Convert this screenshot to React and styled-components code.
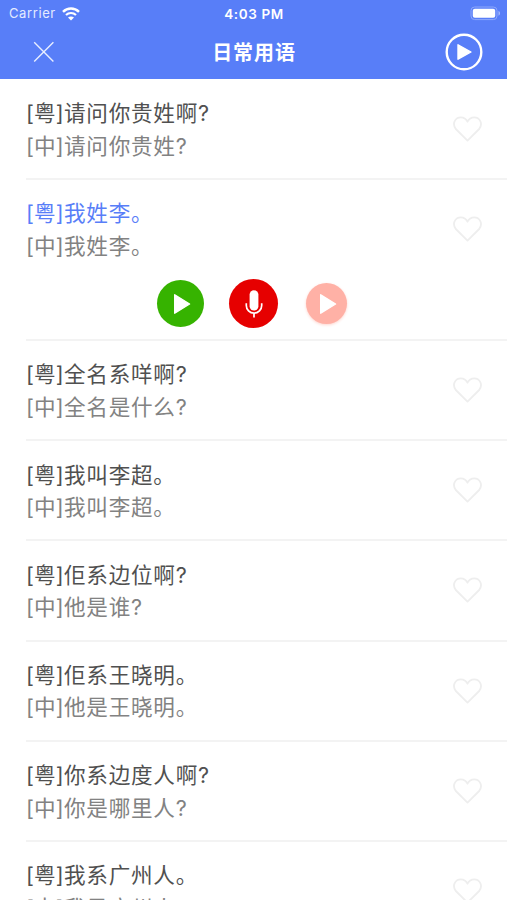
import React, { useState } from "react";
import styled, { createGlobalStyle } from "styled-components";

const GlobalStyle = createGlobalStyle`
  body {
    margin: 0;
    background: #ffffff;
  }
  svg {
    display: block;
  }
`;

const PhraseContainer = styled.div`
  display: flex;
  flex-direction: column;
  width: 507px;
  height: 900px;
  overflow: hidden;
  background: #ffffff;
  font-family: Inter, "Noto Sans CJK SC", sans-serif;
`;

const Header = styled.div`
  flex: none;
  height: 79.3px;
  background: #587ef8;
  color: #ffffff;
`;

const StatusBar = styled.div`
  display: grid;
  grid-template-columns: 1fr auto 1fr;
  align-items: center;
  height: 27px;
  padding: 0 6px 0 9px;
  font-size: 13px;
  line-height: 27px;
  .carrier {
    display: flex;
    align-items: center;
    gap: 6px;
    color: #e4ebff;
    letter-spacing: 0.6px;
  }
  .time {
    padding: 2px 2px 0 0;
    font-weight: 600;
    font-size: 13.5px;
    line-height: 25px;
    letter-spacing: 0.6px;
  }
  .battery {
    justify-self: end;
  }
`;

const TitleBar = styled.div`
  display: grid;
  grid-template-columns: 1fr auto 1fr;
  align-items: center;
  height: 50px;
  padding: 0 24px 0 33px;
  .title {
    margin: 0;
    padding: 2px 8px 0 0;
    font-size: 20px;
    font-weight: 700;
    line-height: 48px;
    letter-spacing: 0.9px;
  }
`;

const IconButton = styled.button`
  display: flex;
  padding: 0;
  border: none;
  background: none;
  cursor: pointer;
  justify-self: ${(props) => props.$side || "start"};
`;

const PhraseList = styled.div`
  display: flex;
  flex-direction: column;
  padding-left: 26px;
`;

const PhraseItem = styled.div`
  flex: none;
  box-sizing: border-box;
  height: ${(props) => (props.$open ? "161px" : "100.2px")};
  border-bottom: 2px solid #f3f3f3;
  &:first-child {
    height: 100.7px;
    padding-top: 0.5px;
  }
`;

const PhraseRow = styled.div`
  display: flex;
  align-items: center;
  justify-content: space-between;
  height: 98px;
  padding-right: 25px;
  .texts {
    padding-top: 1.6px;
  }
`;

const PhraseText = styled.div`
  font-size: 21.6px;
  line-height: 32.3px;
  letter-spacing: 0.75px;
  white-space: nowrap;
  color: ${(props) => props.$color};
`;

const Tag = styled.span`
  letter-spacing: 0.2px;
`;

const Controls = styled.div`
  display: flex;
  align-items: center;
  height: 52px;
  padding-left: 131px;
`;

const RoundButton = styled.button`
  display: flex;
  align-items: center;
  justify-content: center;
  box-sizing: border-box;
  width: ${(props) => props.$size}px;
  height: ${(props) => props.$size}px;
  margin: 0 ${(props) => props.$gap || 0}px 0 0;
  padding: 0 0 0 ${(props) => props.$nudge || 0}px;
  border: none;
  border-radius: 50%;
  background: ${(props) => props.$color};
  box-shadow: ${(props) => (props.$shadow ? "0 1px 3px #ffd5ce" : "none")};
  cursor: pointer;
`;

const phrases = [
  { yue: "请问你贵姓啊?", zh: "请问你贵姓?" },
  { yue: "我姓李。", zh: "我姓李。" },
  { yue: "全名系咩啊?", zh: "全名是什么?" },
  { yue: "我叫李超。", zh: "我叫李超。" },
  { yue: "佢系边位啊?", zh: "他是谁?" },
  { yue: "佢系王晓明。", zh: "他是王晓明。" },
  { yue: "你系边度人啊?", zh: "你是哪里人?" },
  { yue: "我系广州人。", zh: "我是广州人。" },
];

const WifiIcon = () => (
  <svg width="18" height="14" viewBox="0 0 18 14" fill="none" stroke="#fff">
    <path d="M1 4.8C5.5.3 12.5.3 17 4.8" strokeWidth="2.4" />
    <path d="M4 8c2.8-2.7 7.2-2.7 10 0" strokeWidth="2.2" />
    <path d="M9 13.5 6 10.6c1.7-1.5 4.3-1.5 6 0Z" fill="#fff" stroke="none" />
  </svg>
);

const BatteryIcon = () => (
  <svg width="31" height="15" viewBox="0 0 31 15" fill="none">
    <rect x="1" y="1" width="26" height="12.6" rx="3.6" stroke="#8fa8fb" />
    <rect x="2.8" y="2.8" width="22.4" height="9" rx="2" fill="#fff" />
    <path d="M28.5 5c2 .7 2 4 0 4.7Z" fill="#a6bafc" />
  </svg>
);

const PlayIcon = () => (
  <svg width="18" height="22" viewBox="0 0 18 22">
    <path
      d="M1.7 1.8 16.6 11 1.7 20.2Z"
      fill="#fff"
      stroke="#fff"
      strokeWidth="1.4"
      strokeLinejoin="round"
    />
  </svg>
);

const MicIcon = () => (
  <svg width="18" height="30" viewBox="0 0 18 30" fill="none" stroke="#fff">
    <rect x="4.6" y="1.2" width="8.8" height="20.4" rx="4.4" fill="#fff" stroke="none" />
    <path d="M1.3 14.2v2.2a7.7 7.7 0 0 0 15.4 0v-2.2M9 24v4.6" strokeWidth="1.7" />
  </svg>
);

const HeartIcon = ({ liked }) => (
  <svg width="29" height="26" viewBox="0 0 29 26">
    <path
      d="M14.5 24.6 2.8 13C-1.4 7.4 2.4 1.3 7.8 1.3c3 0 5.3 1.5 6.7 4.4 1.4-2.9 3.7-4.4 6.7-4.4 5.4 0 9.2 6.1 5 11.7Z"
      fill={liked ? "#e60000" : "none"}
      stroke={liked ? "#e60000" : "#eeeeee"}
      strokeWidth="1.8"
      strokeLinejoin="round"
    />
  </svg>
);

const PhraseControls = () => (
  <Controls>
    <RoundButton $size={47} $gap={25} $nudge={3} $color="#36b300">
      <PlayIcon />
    </RoundButton>
    <RoundButton $size={49} $gap={28} $color="#e60000">
      <MicIcon />
    </RoundButton>
    <RoundButton $size={41} $nudge={3} $color="#ffb1a6" $shadow>
      <PlayIcon />
    </RoundButton>
  </Controls>
);

const App = () => {
  const [selected, setSelected] = useState(1);
  const [liked, setLiked] = useState([]);

  const onLike = (e, index) => {
    e.stopPropagation();
    if (liked.includes(index)) {
      setLiked(liked.filter((item) => item !== index));
    } else {
      setLiked([...liked, index]);
    }
  };

  return (
    <PhraseContainer>
      <GlobalStyle />
      <Header>
        <StatusBar>
          <div className="carrier">
            Carrier
            <WifiIcon />
          </div>
          <div className="time">4:03 PM</div>
          <div className="battery">
            <BatteryIcon />
          </div>
        </StatusBar>
        <TitleBar>
          <IconButton>
            <svg width="22" height="22" viewBox="0 0 22 22">
              <path d="M1.2 1.2 20.4 20.4M20.4 1.2 1.2 20.4" stroke="#e8eeff" strokeWidth="1.4" />
            </svg>
          </IconButton>
          <h1 className="title">日常用语</h1>
          <IconButton $side="end">
            <svg width="38" height="38" viewBox="0 0 38 38">
              <circle cx="19" cy="19" r="17.3" fill="none" stroke="#fff" strokeWidth="2.4" />
              <path
                d="M13 11.8 26 19 13 26.2Z"
                fill="#fff"
                stroke="#fff"
                strokeWidth="1.4"
                strokeLinejoin="round"
              />
            </svg>
          </IconButton>
        </TitleBar>
      </Header>
      <PhraseList>
        {phrases.map((phrase, index) => (
          <PhraseItem key={index} $open={selected === index}>
            <PhraseRow onClick={() => setSelected(index)}>
              <div className="texts">
                <PhraseText $color={selected === index ? "#587ef8" : "#505050"}>
                  <Tag>[粤]</Tag>
                  {phrase.yue}
                </PhraseText>
                <PhraseText $color="#828282">
                  <Tag>[中]</Tag>
                  {phrase.zh}
                </PhraseText>
              </div>
              <IconButton onClick={(e) => onLike(e, index)}>
                <HeartIcon liked={liked.includes(index)} />
              </IconButton>
            </PhraseRow>
            {selected === index && <PhraseControls />}
          </PhraseItem>
        ))}
      </PhraseList>
    </PhraseContainer>
  );
};

export default App;
